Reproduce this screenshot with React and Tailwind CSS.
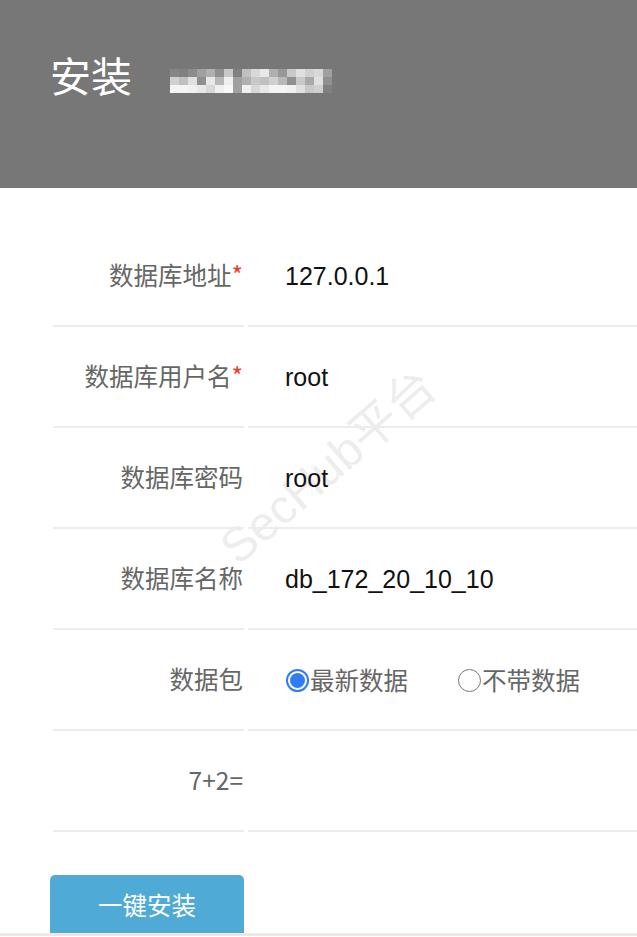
const blur = [
  [0x86, 0x80, 0x8c, 0xa0, 0xb0, 0x90, 0xc8, 0x80, 0xc0, 0xd8, 0xe8, 0xb0, 0x98, 0xc8, 0xe0, 0xd0, 0xd8, 0xa0],
  [0xd0, 0xc0, 0xe0, 0x90, 0xe8, 0xb8, 0xf0, 0xa0, 0xb0, 0xc8, 0xc0, 0xd0, 0xb8, 0x90, 0xc8, 0xa8, 0xe0, 0x90],
  [0xf4, 0xf4, 0xf0, 0xe8, 0xd8, 0xf0, 0xf8, 0xa0, 0xf0, 0xd8, 0xe8, 0xf4, 0xf4, 0xf0, 0xe0, 0xc8, 0xd0, 0x80],
]

const cjk = { fontFamily: '"Noto Sans CJK SC", "Liberation Sans", sans-serif' }
const latin = { fontFamily: '"Liberation Sans", "Noto Sans CJK SC", sans-serif' }

function Row({ label, required, children }) {
  return (
    <div className="flex h-[101px]">
      <div className="ml-[53px] w-[191px] border-b-2 border-[#ececec] flex items-center justify-end pr-[1px] text-[24.5px] text-[#666]" style={cjk}>
        <span>{label}</span>
        {required && <span className="text-[#f03a2e]">*</span>}
      </div>
      <div className="ml-[4px] flex-1 border-b-2 border-[#ececec] flex items-center pl-[37px] pt-[2px] text-[25px] text-[#111]" style={latin}>
        {children}
      </div>
    </div>
  )
}

function Radio({ checked, label }) {
  return (
    <label className="flex items-center">
      {checked ? (
        <span className="w-[23px] h-[23px] rounded-full border-2 border-[#2f7cf6] bg-white flex items-center justify-center">
          <span className="w-[15px] h-[15px] rounded-full bg-[#2f7cf6]" />
        </span>
      ) : (
        <span className="w-[23px] h-[23px] rounded-full border-[1.5px] border-[#767676] bg-white" />
      )}
      <span className="text-[24.5px] text-[#666] ml-[1px]" style={cjk}>{label}</span>
    </label>
  )
}

export default function App() {
  return (
    <div className="w-[637px] h-[937px] bg-white overflow-hidden relative">
      <div className="h-[188px] bg-[#777777] flex items-start pt-[46px] pl-[50px]">
        <h1 className="text-[41px] leading-[56px] text-white" style={cjk}>安装</h1>
        <div className="ml-[38px] mt-[23px] flex flex-col">
          {blur.map((row, i) => (
            <div key={i} className="flex">
              {row.map((v, j) => (
                <span key={j} className="w-[9px] h-[8px]" style={{ backgroundColor: `rgb(${v},${v},${v})` }} />
              ))}
            </div>
          ))}
        </div>
      </div>

      <div className="absolute left-[195px] top-[431px] rotate-[-41deg] pointer-events-none text-[48px] text-[#ededed] whitespace-nowrap" style={latin}>
        SecHub平台
      </div>

      <div className="relative pt-[38px]">
        <Row label="数据库地址" required>127.0.0.1</Row>
        <Row label="数据库用户名" required>root</Row>
        <Row label="数据库密码">root</Row>
        <Row label="数据库名称">db_172_20_10_10</Row>
        <Row label="数据包">
          <div className="flex items-center gap-[50px] ml-[1px]">
            <Radio checked label="最新数据" />
            <Radio label="不带数据" />
          </div>
        </Row>
        <Row label="7+2=" />
      </div>

      <div className="relative pt-[43px] pl-[50px]">
        <button className="w-[194px] h-[58px] rounded-t-[5px] bg-[#50aad6] text-white text-[24.5px] pt-[2px]" style={cjk}>
          一键安装
        </button>
      </div>
      <div className="h-[3px] bg-[#efe8e1]" />
    </div>
  )
}
